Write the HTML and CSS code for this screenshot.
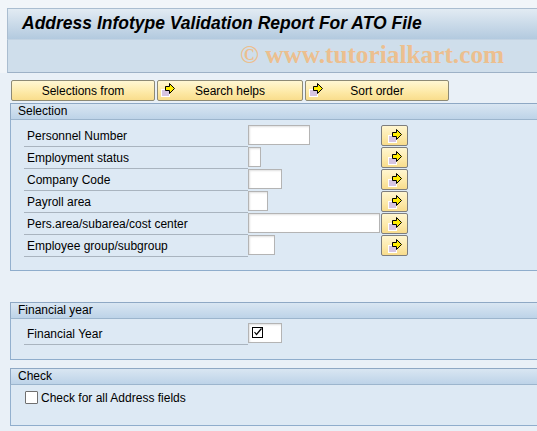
FILE: index.html
```html
<!DOCTYPE html>
<html>
<head>
<meta charset="utf-8">
<link rel="stylesheet" href="styles.css">
</head>
<body>
<div class="page">
  <div class="head">
    <div class="titlebar">Address Infotype Validation Report For ATO File</div>
    <div class="toolbar"><span class="mark">© www.tutorialkart.com</span></div>
  </div>

  <div class="btnrow">
    <div class="btn w1"><span class="btxt">Selections from</span></div>
    <div class="btn w2"><svg class="ico" viewBox="0 0 16 16"><rect x="1.5" y="7.5" width="8" height="7" fill="#d6c4e2" stroke="#ffffff" stroke-width="1"/><polygon points="5.5,4.5 9.5,4.5 9.5,1.5 14.5,6.5 9.5,11.5 9.5,8.5 5.5,8.5" fill="#ffec00" stroke="#000" stroke-width="1"/></svg><span class="btxt">Search helps</span></div>
    <div class="btn w3"><svg class="ico" viewBox="0 0 16 16"><rect x="1.5" y="7.5" width="8" height="7" fill="#d6c4e2" stroke="#ffffff" stroke-width="1"/><polygon points="5.5,4.5 9.5,4.5 9.5,1.5 14.5,6.5 9.5,11.5 9.5,8.5 5.5,8.5" fill="#ffec00" stroke="#000" stroke-width="1"/></svg><span class="btxt">Sort order</span></div>
  </div>

  <div class="group g-sel">
    <div class="ghead">Selection</div>
    <div class="gbody">
      <div class="row"><div class="lbl">Personnel Number</div><div class="inp" style="width:62px"></div><div class="mbtn"><svg viewBox="0 0 16 16"><rect x="1.5" y="7.5" width="8" height="7" fill="#d6c4e2" stroke="#ffffff"/><polygon points="5.5,4.5 9.5,4.5 9.5,1.5 14.5,6.5 9.5,11.5 9.5,8.5 5.5,8.5" fill="#ffec00" stroke="#000"/></svg></div></div>
      <div class="row"><div class="lbl">Employment status</div><div class="inp" style="width:13px"></div><div class="mbtn"><svg viewBox="0 0 16 16"><rect x="1.5" y="7.5" width="8" height="7" fill="#d6c4e2" stroke="#ffffff"/><polygon points="5.5,4.5 9.5,4.5 9.5,1.5 14.5,6.5 9.5,11.5 9.5,8.5 5.5,8.5" fill="#ffec00" stroke="#000"/></svg></div></div>
      <div class="row"><div class="lbl">Company Code</div><div class="inp" style="width:34px"></div><div class="mbtn"><svg viewBox="0 0 16 16"><rect x="1.5" y="7.5" width="8" height="7" fill="#d6c4e2" stroke="#ffffff"/><polygon points="5.5,4.5 9.5,4.5 9.5,1.5 14.5,6.5 9.5,11.5 9.5,8.5 5.5,8.5" fill="#ffec00" stroke="#000"/></svg></div></div>
      <div class="row"><div class="lbl">Payroll area</div><div class="inp" style="width:20px"></div><div class="mbtn"><svg viewBox="0 0 16 16"><rect x="1.5" y="7.5" width="8" height="7" fill="#d6c4e2" stroke="#ffffff"/><polygon points="5.5,4.5 9.5,4.5 9.5,1.5 14.5,6.5 9.5,11.5 9.5,8.5 5.5,8.5" fill="#ffec00" stroke="#000"/></svg></div></div>
      <div class="row"><div class="lbl">Pers.area/subarea/cost center</div><div class="inp" style="width:132px"></div><div class="mbtn"><svg viewBox="0 0 16 16"><rect x="1.5" y="7.5" width="8" height="7" fill="#d6c4e2" stroke="#ffffff"/><polygon points="5.5,4.5 9.5,4.5 9.5,1.5 14.5,6.5 9.5,11.5 9.5,8.5 5.5,8.5" fill="#ffec00" stroke="#000"/></svg></div></div>
      <div class="row"><div class="lbl">Employee group/subgroup</div><div class="inp" style="width:27px"></div><div class="mbtn"><svg viewBox="0 0 16 16"><rect x="1.5" y="7.5" width="8" height="7" fill="#d6c4e2" stroke="#ffffff"/><polygon points="5.5,4.5 9.5,4.5 9.5,1.5 14.5,6.5 9.5,11.5 9.5,8.5 5.5,8.5" fill="#ffec00" stroke="#000"/></svg></div></div>
    </div>
  </div>

  <div class="group g-fy">
    <div class="ghead">Financial year</div>
    <div class="gbody fybody">
      <div class="row"><div class="lbl">Financial Year</div><div class="inp" style="width:34px"><svg class="chk" viewBox="0 0 12 12"><rect x="0.5" y="0.5" width="10" height="10" fill="none" stroke="#000"/><polyline points="2.5,5 4.5,7.5 9.5,1.5" fill="none" stroke="#000" stroke-width="1.2"/></svg></div></div>
    </div>
  </div>

  <div class="group g-chk">
    <div class="ghead">Check</div>
    <div class="gbody chkbody">
      <label class="cbrow"><span class="cbox"></span><span>Check for all Address fields</span></label>
    </div>
  </div>
</div>
</body>
</html>
```

FILE: styles.css
```css
html, body {
  margin: 0;
  padding: 0;
}
body {
  background: #e9f0f7;
  font-family: "Liberation Sans", Arial, sans-serif;
  font-size: 12px;
  color: #000;
  width: 537px;
  height: 431px;
  overflow: hidden;
}
.page {
  width: 537px;
}
.head {
  padding-top: 8px;
  padding-left: 7px;
  background: #f1f5f9;
}
.titlebar {
  height: 30px;
  border-top: 1px solid #aabdd0;
  border-left: 1px solid #aabdd0;
  background: linear-gradient(#e2ebf3, #b3cadf);
  font-weight: bold;
  font-style: italic;
  font-size: 17.5px;
  line-height: 28px;
  padding-left: 14px;
  color: #000;
  white-space: nowrap;
}
.toolbar {
  height: 32px;
  border-left: 1px solid #aabdd0;
  border-top: 1px solid #c2d3e3;
  border-bottom: 1px solid #9db1c6;
  background: #cfdeeb;
  display: flex;
  align-items: center;
  padding-left: 232px;
}
.mark {
  font-family: "Liberation Serif", "Times New Roman", serif;
  font-weight: bold;
  font-size: 25.3px;
  line-height: 26px;
  margin-top: -4px;
  color: #ecbf8f;
  white-space: nowrap;
}
.btnrow {
  display: flex;
  gap: 2px;
  padding-left: 11px;
  margin-top: 7px;
}
.btn {
  height: 19px;
  border: 1px solid #8d8a76;
  border-radius: 2px;
  background: linear-gradient(#fff7d4, #fde9a6 60%, #f9dd8c);
  position: relative;
  display: flex;
  align-items: center;
  justify-content: center;
  font-size: 12px;
}
.w1 { width: 142px; }
.w2 { width: 144px; }
.w3 { width: 142px; }
.ico {
  position: absolute;
  left: 2px;
  top: 1px;
  width: 16px;
  height: 16px;
}
.group {
  margin-left: 10px;
}
.g-sel { margin-top: 2px; }
.g-fy { margin-top: 31px; }
.g-chk { margin-top: 8px; }
.ghead {
  height: 15px;
  border-top: 1px solid #8ea8c4;
  border-left: 1px solid #8ea8c4;
  border-bottom: 1px solid #9cb5cd;
  background: linear-gradient(#d9e6f2, #bdd3e8);
  padding-left: 7px;
  line-height: 15px;
  font-size: 12px;
}
.gbody {
  background: #dde9f4;
  border-left: 1px solid #93b0ce;
  border-bottom: 1px solid #8fadcc;
  padding: 5px 0 13px 13px;
}
.row {
  display: flex;
  height: 22px;
  position: relative;
}
.lbl {
  width: 221px;
  padding-left: 3px;
  height: 21px;
  line-height: 22px;
  border-bottom: 1px solid #a9b4bf;
  white-space: nowrap;
  font-size: 12px;
}
.inp {
  box-sizing: border-box;
  height: 20px;
  background: #fff;
  border: 1px solid #b4b4b4;
  box-shadow: inset 1px 1px 2px #e0e0e0;
  position: relative;
}
.mbtn {
  box-sizing: border-box;
  width: 27px;
  height: 21px;
  border: 1px solid #7e7e7e;
  border-radius: 2px;
  background: linear-gradient(#fff6d0, #fde9a8 60%, #f8dc8c);
  position: absolute;
  left: 357px;
  top: 0;
  display: flex;
  align-items: center;
  justify-content: center;
}
.mbtn svg {
  width: 16px;
  height: 16px;
}
.chk {
  position: absolute;
  left: 3px;
  top: 3px;
  width: 12px;
  height: 12px;
}
.fybody {
  padding: 4px 0 14px 13px;
}
.chkbody {
  padding: 5px 0 20px 14px;
}
.cbrow {
  display: flex;
  align-items: center;
  height: 15px;
  font-size: 12px;
}
.cbox {
  width: 11px;
  height: 11px;
  background: #fff;
  border: 1px solid #707070;
  border-radius: 1px;
  margin-right: 3px;
}
```
